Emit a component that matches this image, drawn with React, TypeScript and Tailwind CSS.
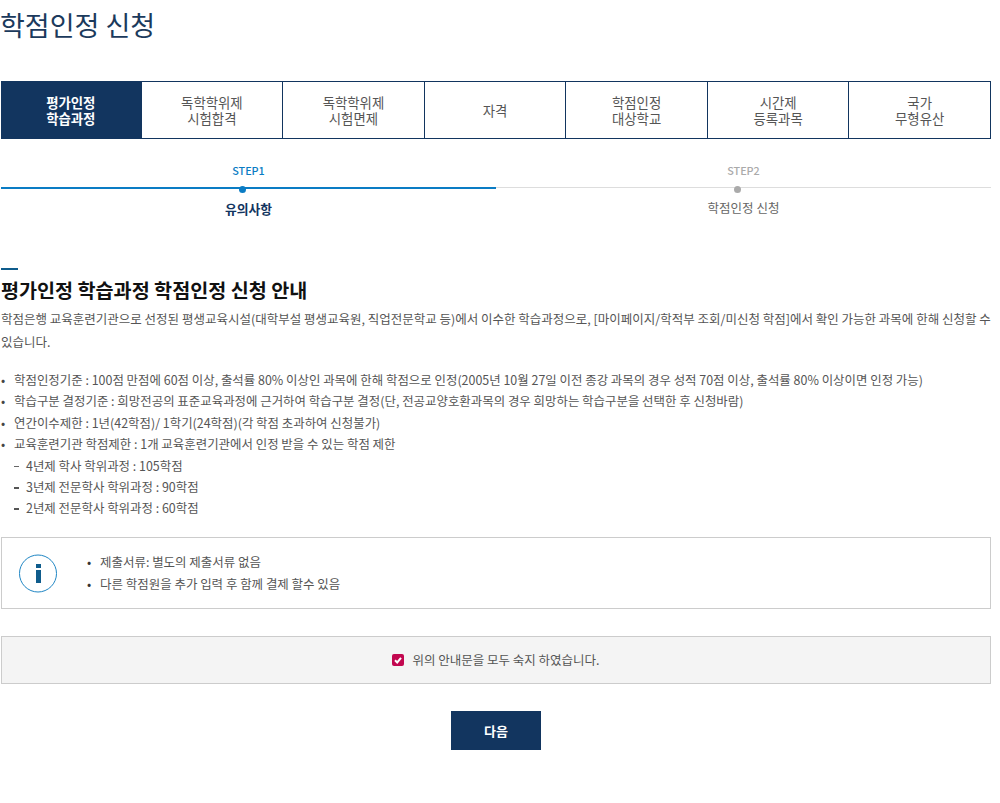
const tabs = [
  ["평가인정", "학습과정"],
  ["독학학위제", "시험합격"],
  ["독학학위제", "시험면제"],
  ["자격"],
  ["학점인정", "대상학교"],
  ["시간제", "등록과목"],
  ["국가", "무형유산"],
]

const rules = [
  "학점인정기준 : 100점 만점에 60점 이상, 출석률 80% 이상인 과목에 한해 학점으로 인정(2005년 10월 27일 이전 종강 과목의 경우 성적 70점 이상, 출석률 80% 이상이면 인정 가능)",
  "학습구분 결정기준 : 희망전공의 표준교육과정에 근거하여 학습구분 결정(단, 전공교양호환과목의 경우 희망하는 학습구분을 선택한 후 신청바람)",
  "연간이수제한 : 1년(42학점)/ 1학기(24학점)(각 학점 초과하여 신청불가)",
  "교육훈련기관 학점제한 : 1개 교육훈련기관에서 인정 받을 수 있는 학점 제한",
]

const limits = ["4년제 학사 학위과정 : 105학점", "3년제 전문학사 학위과정 : 90학점", "2년제 전문학사 학위과정 : 60학점"]

const notes = ["제출서류: 별도의 제출서류 없음", "다른 학점원을 추가 입력 후 함께 결제 할수 있음"]

export default function App() {
  return (
    <div className="w-[1000px] h-[803px] overflow-hidden bg-white pl-px pr-[9px] font-['Noto_Sans_CJK_KR','Noto_Sans',sans-serif] text-[#555]">
      {/* Title */}
      <h1 className="-ml-px h-[81px] pt-[4px] text-[27px] leading-[42px] font-normal text-[#1b3a5c]">학점인정 신청</h1>

      {/* Tabs */}
      <div className="flex h-[58px] border border-[#12355f] border-l-0">
        {tabs.map((t, i) => (
          <div
            key={t[0] + i}
            className={
              i === 0
                ? "flex w-[139.6px] shrink-0 flex-col items-center justify-center bg-[#12355f] text-[13.4px] leading-[16px] font-bold text-white"
                : "flex flex-1 flex-col items-center justify-center border-l border-[#12355f] text-[13.4px] leading-[16px] text-[#555]"
            }
          >
            {t.map(line => (
              <span key={line}>{line}</span>
            ))}
          </div>
        ))}
      </div>

      {/* Steps */}
      <div className="flex h-[79px]">
        <div className="relative w-[495px] flex flex-col items-center">
          <span className="mt-[23px] text-[10.8px] leading-[16px] font-medium text-[#0a7cc4]">STEP1</span>
          <div className="mt-[9px] h-[2px] w-full bg-[#0a7cc4]" />
          <span className="absolute top-[47px] left-[238px] size-[7px] rounded-full bg-[#0a7cc4]" />
          <span className="mt-[11px] text-[12.8px] leading-[18px] font-bold text-[#12355f]">유의사항</span>
        </div>
        <div className="relative flex-1 flex flex-col items-center">
          <span className="mt-[23px] text-[10.8px] leading-[16px] font-medium text-[#aaa]">STEP2</span>
          <div className="mt-[9px] h-px w-full bg-[#ddd]" />
          <span className="absolute top-[47px] left-[238px] size-[7px] rounded-full bg-[#aaa]" />
          <span className="mt-[11px] text-[12.5px] leading-[18px] text-[#666]">학점인정 신청</span>
        </div>
      </div>

      {/* Guide */}
      <div className="mt-[50px] h-[2px] w-[17px] bg-[#0f5c8c]" />
      <h2 className="mt-[2px] text-[19.6px] leading-[36px] font-bold text-[#111]">평가인정 학습과정 학점인정 신청 안내</h2>
      <p className="-mt-[1px] text-[12.5px] leading-[23px] text-[#555]">
        학점은행 교육훈련기관으로 선정된 평생교육시설(대학부설 평생교육원, 직업전문학교 등)에서 이수한 학습과정으로, [마이페이지/학적부 조회/미신청 학점]에서 확인 가능한 과목에 한해 신청할 수 있습니다.
      </p>

      <ul className="mt-[17px] text-[12.45px] leading-[21.4px] text-[#555]">
        {rules.map(r => (
          <li key={r} className="flex">
            <span className="w-[13px] shrink-0 text-[#444]">•</span>
            <span className="whitespace-nowrap">{r}</span>
          </li>
        ))}
        {limits.map((l, i) => (
          <li key={l} className="flex items-center pl-[13px]">
            <span className={i === 0 ? "mr-[7px] h-px w-[5px] shrink-0 bg-[#666]" : "mr-[7px] h-[2px] w-[5px] shrink-0 bg-[#555]"} />
            <span>{l}</span>
          </li>
        ))}
      </ul>

      {/* Notice */}
      <div className="mt-[17.3px] flex h-[72px] items-center border border-[#ccc] pl-[17px]">
        <svg width="38" height="39" viewBox="0 0 38 39" fill="none" className="shrink-0">
          <circle cx="19" cy="19.5" r="18.5" stroke="#1f86c4" />
          <rect x="17" y="10" width="5" height="4" fill="#0f5c8c" />
          <rect x="17" y="16" width="5" height="13" fill="#0f5c8c" />
        </svg>
        <ul className="ml-[30px] text-[12.47px] leading-[22px] text-[#555]">
          {notes.map(n => (
            <li key={n} className="flex">
              <span className="w-[13px] shrink-0 text-[#333]">•</span>
              <span>{n}</span>
            </li>
          ))}
        </ul>
      </div>

      {/* Confirm */}
      <label className="mt-[27px] flex h-[48px] items-center justify-center gap-[8px] border border-[#ccc] bg-[#f4f4f4] text-[12.5px] text-[#555]">
        <span className="flex size-[12px] items-center justify-center rounded-[2px] bg-[#c2074f]">
          <svg width="10" height="10" viewBox="0 0 10 10" fill="none">
            <path d="M2 5.2 4.2 7.4 8 2.8" stroke="white" strokeWidth="2" />
          </svg>
        </span>
        위의 안내문을 모두 숙지 하였습니다.
      </label>

      <div className="mt-[27px] flex justify-center">
        <button className="h-[39px] w-[90px] bg-[#12355f] text-[13px] font-bold text-white">다음</button>
      </div>
    </div>
  )
}
